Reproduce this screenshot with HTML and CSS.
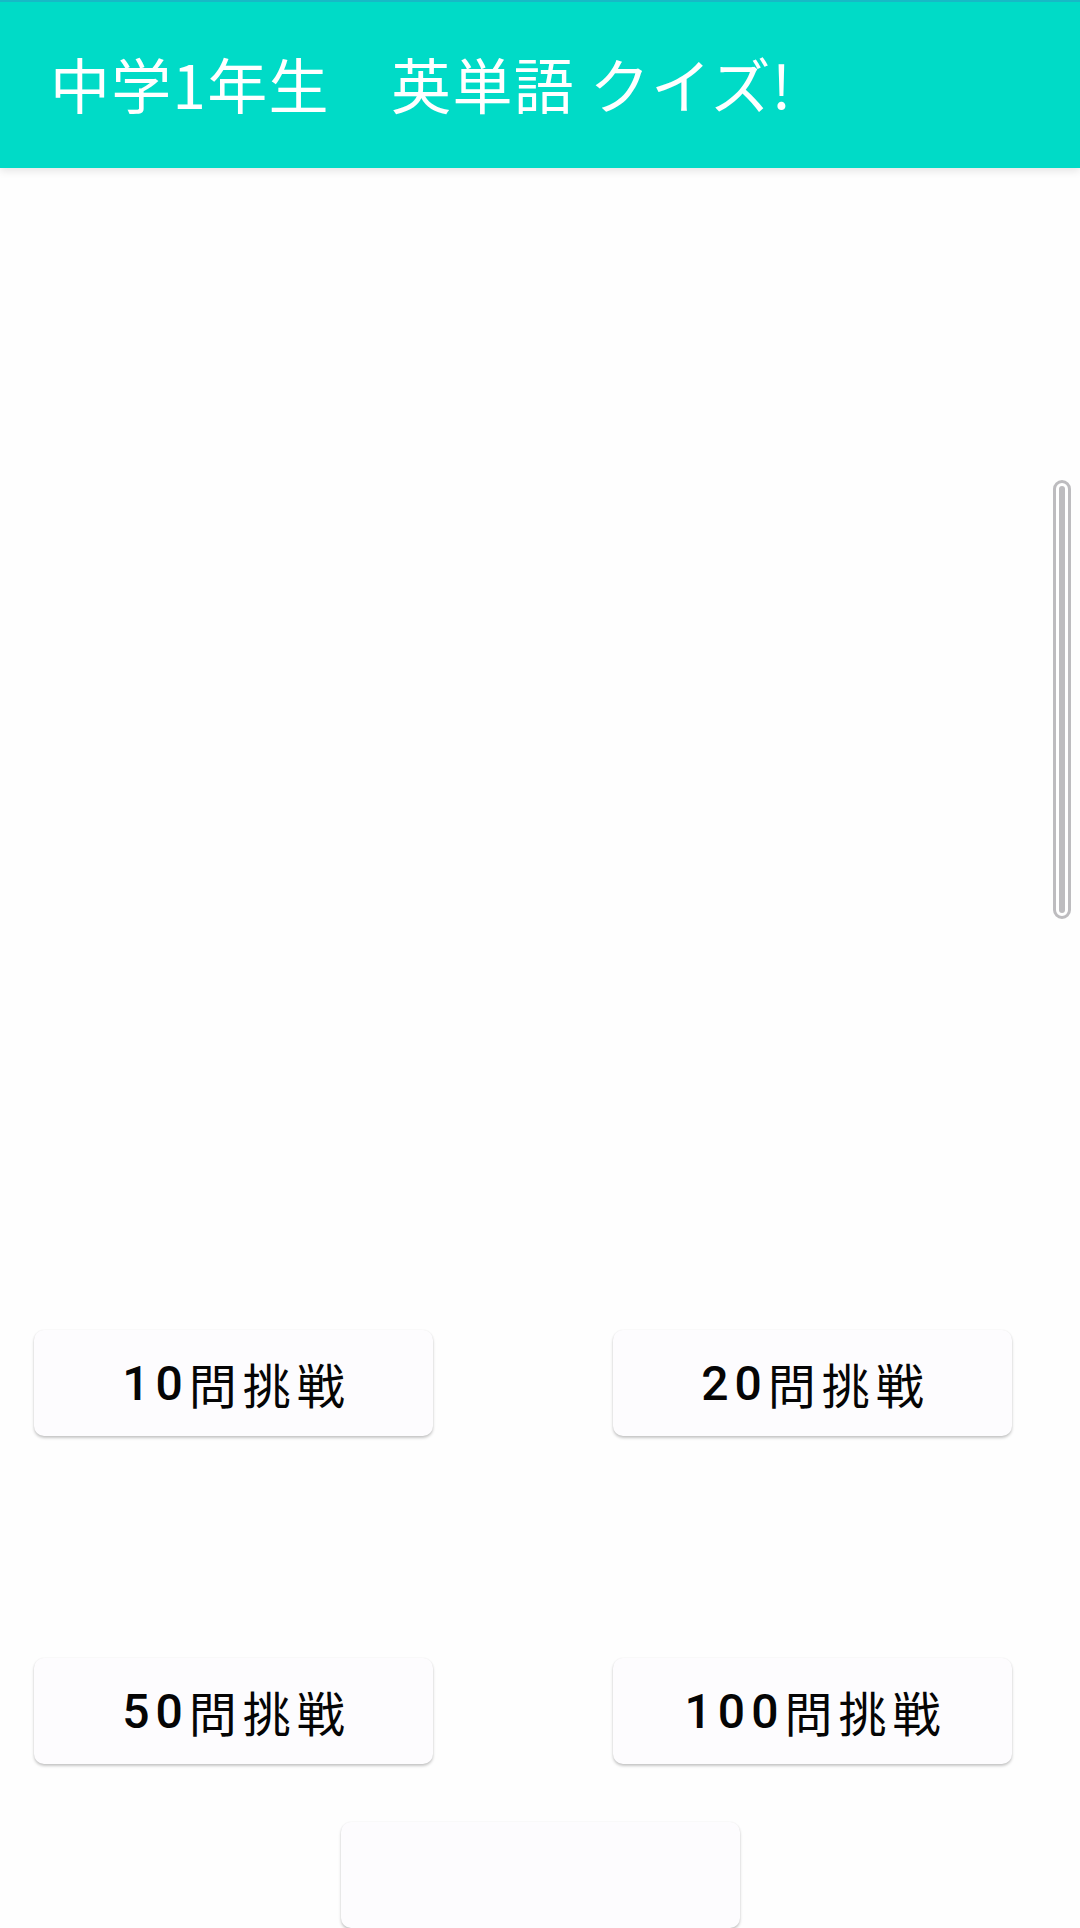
FILE: index.html
```html
<!DOCTYPE html>
<html lang="ja">
<head>
<meta charset="utf-8">
<title>中学1年生　英単語 クイズ!</title>
<link rel="stylesheet" href="styles.css">
</head>
<body>
<div class="app">
  <header class="appbar">
    <h1 class="title">中学1年生　英単語 クイズ!</h1>
  </header>
  <main class="content">
    <div class="grid">
      <button class="btn">10<span class="kanji">問挑戦</span></button>
      <button class="btn">20<span class="kanji">問挑戦</span></button>
      <button class="btn">50<span class="kanji">問挑戦</span></button>
      <button class="btn">100<span class="kanji">問挑戦</span></button>
    </div>
    <div class="center-row">
      <button class="btn"></button>
    </div>
  </main>
  <div class="scrollbar"><div class="scrollbar-thumb"></div></div>
</div>
</body>
</html>
```

FILE: styles.css
```css
html, body {
  margin: 0;
  padding: 0;
  background: #fefefe;
}
body {
  width: 1080px;
  height: 1928px;
  overflow: hidden;
  font-family: "Noto Sans CJK JP", "Noto Sans", sans-serif;
}
.app {
  position: relative;
  width: 1080px;
  height: 1928px;
  overflow: hidden;
}
.appbar {
  height: 166px;
  background: #00dbc7;
  border-top: 2px solid #17b9c6;
  display: flex;
  align-items: center;
  padding-left: 50px;
  box-shadow: 0 3px 8px rgba(0, 0, 0, 0.10);
  position: relative;
  z-index: 1;
}
.title {
  margin: 0;
  color: #ffffff;
  font-size: 60px;
  font-weight: 400;
  line-height: 1;
  letter-spacing: 1.3px;
  padding-bottom: 5px;
}
.content {
  padding-top: 1162px;
}
.grid {
  display: grid;
  grid-template-columns: 399px 399px;
  column-gap: 180px;
  row-gap: 222px;
  padding-left: 34px;
}
.btn {
  width: 399px;
  height: 106px;
  border: none;
  border-radius: 10px;
  background: #fdfcfe;
  box-shadow: 0 2px 3px rgba(0, 0, 0, 0.22), 0 0 2px rgba(0, 0, 0, 0.06);
  font-family: "Roboto", "Noto Sans CJK JP", sans-serif;
  font-weight: 500;
  font-size: 48px;
  letter-spacing: 6px;
  color: #050505;
  padding: 0 0 0 6px;
  display: flex;
  align-items: center;
  justify-content: center;
}
.kanji {
  font-family: "Noto Sans CJK JP", sans-serif;
  font-weight: 400;
}
.center-row {
  display: flex;
  justify-content: center;
  margin-top: 58px;
}
.scrollbar {
  position: absolute;
  left: 1053px;
  top: 480px;
  width: 12px;
  height: 427px;
  border: 3px solid #bdbcbf;
  border-radius: 9px;
  background: #ffffff;
  display: flex;
  justify-content: center;
  padding: 3px 0;
  box-sizing: content-box;
}
.scrollbar-thumb {
  width: 6px;
  height: 100%;
  background: #bdbcbf;
  border-radius: 3px;
}
```
